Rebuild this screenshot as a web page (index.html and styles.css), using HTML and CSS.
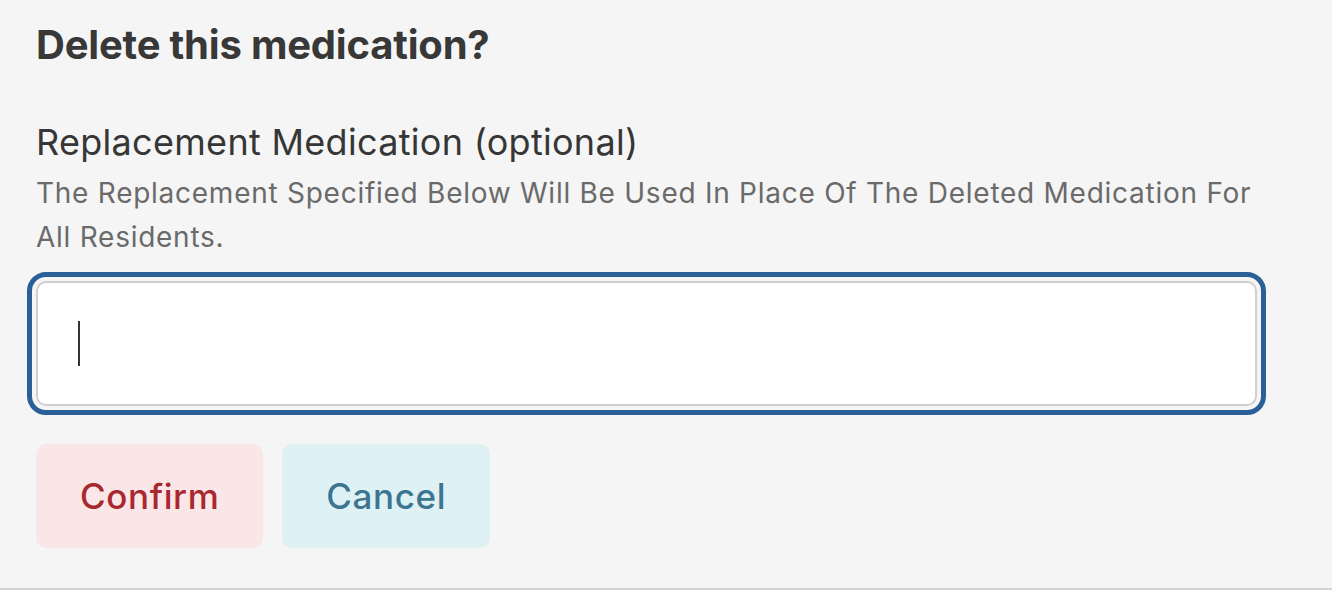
FILE: index.html
```html
<!DOCTYPE html>
<html>
<head>
<meta charset="utf-8">
<link rel="stylesheet" href="styles.css">
</head>
<body>
<div class="dialog">
  <h2 class="title">Delete this medication?</h2>
  <div class="field">
    <label class="label">Replacement Medication (optional)</label>
    <p class="desc">The Replacement Specified Below Will Be Used In Place Of The Deleted Medication For All Residents.</p>
    <div class="input"><span class="caret"></span></div>
  </div>
  <div class="actions">
    <button class="btn btn-confirm">Confirm</button>
    <button class="btn btn-cancel">Cancel</button>
  </div>
</div>
</body>
</html>
```
FILE: styles.css
```css
html, body {
  margin: 0;
  padding: 0;
  background: #ffffff;
}
body {
  font-family: Inter, "Noto Sans", sans-serif;
}
.dialog {
  box-sizing: border-box;
  height: 590px;
  background: #f5f5f5;
  border-bottom: 2px solid #d3d3d3;
  padding: 21px 75px 0 36px;
}
.title {
  margin: 0;
  font-size: 40px;
  line-height: 48px;
  font-weight: 700;
  letter-spacing: -0.2px;
  color: #383838;
}
.field {
  margin-top: 52px;
}
.label {
  display: block;
  font-size: 36px;
  line-height: 43px;
  letter-spacing: 0.3px;
  color: #363636;
}
.desc {
  margin: 7px 0 0;
  font-size: 28px;
  line-height: 44px;
  letter-spacing: 0.74px;
  color: #6a6a6a;
}
.input {
  box-sizing: border-box;
  margin-top: 22px;
  height: 125px;
  background: #ffffff;
  border: 2px solid #d0d0d0;
  border-radius: 10px;
  outline: 5px solid #2b5f97;
  outline-offset: 4px;
  padding: 38px 0 0 40px;
}
.caret {
  display: block;
  width: 2px;
  height: 45px;
  background: #333333;
}
.actions {
  display: flex;
  gap: 19px;
  margin-top: 38px;
}
.btn {
  box-sizing: border-box;
  height: 104px;
  border: none;
  border-radius: 10px;
  padding: 0 44px;
  font-family: Inter, "Noto Sans", sans-serif;
  font-size: 35px;
  font-weight: 500;
  letter-spacing: 0.6px;
}
.btn-confirm {
  background: #fae6e6;
  color: #a9282f;
}
.btn-cancel {
  background: #def1f5;
  color: #3b7590;
}
```
